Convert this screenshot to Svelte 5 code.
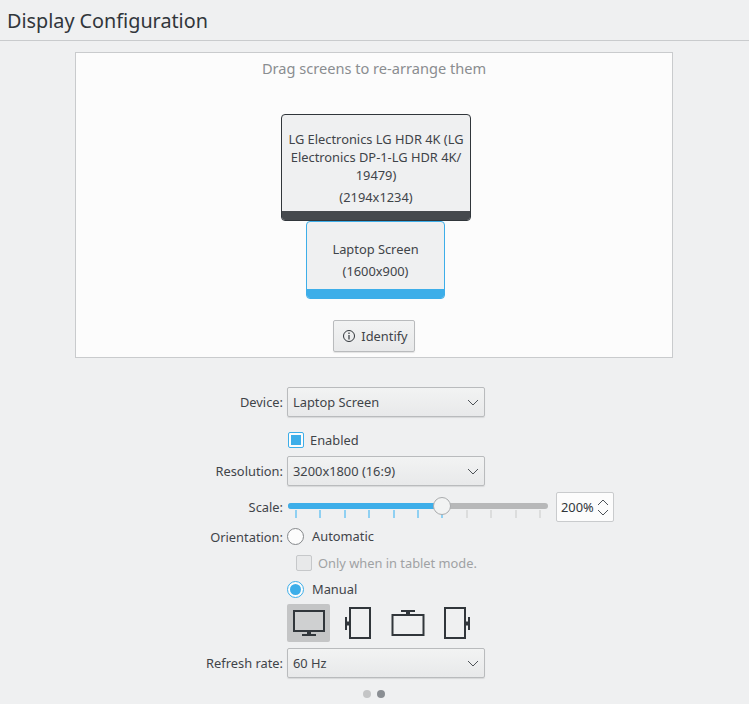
<script>
  const ticks = Array.from({ length: 11 }, (_, i) => i);
</script>

<div class="page">
  <header class="title">Display Configuration</header>

  <section class="canvas">
    <p class="hint">Drag screens to re-arrange them</p>
    <div class="screen lg">
      <div class="body">
        <span class="name">LG Electronics LG HDR 4K (LG Electronics DP-1-LG HDR 4K/ 19479)</span>
        <span class="res">(2194x1234)</span>
      </div>
      <div class="bar"></div>
    </div>
    <div class="screen laptop">
      <div class="body">
        <span class="name">Laptop Screen</span>
        <span class="res">(1600x900)</span>
      </div>
      <div class="bar"></div>
    </div>
    <button class="identify">
      <svg width="14" height="14" viewBox="0 0 14 14" fill="none" stroke="#31363b">
        <circle cx="7" cy="7" r="5.5" />
        <path d="M7 6v4.5M7 3.5v1.5" stroke-width="1.2" />
      </svg>
      Identify
    </button>
  </section>

  <section class="form">
    <span class="label">Device:</span>
    <div class="combo">Laptop Screen <svg class="chev" width="12" height="7" viewBox="0 0 12 7" fill="none" stroke="#4d5257"><path d="M1 1l5 5 5-5" /></svg></div>

    <span></span>
    <div class="check-row enabled"><span class="check on"><i></i></span>Enabled</div>

    <span class="label">Resolution:</span>
    <div class="combo">3200x1800 (16:9) <svg class="chev" width="12" height="7" viewBox="0 0 12 7" fill="none" stroke="#4d5257"><path d="M1 1l5 5 5-5" /></svg></div>

    <span class="label">Scale:</span>
    <div class="scale-row">
      <div class="slider">
        <div class="track"><div class="fill"></div></div>
        <div class="ticks">
          {#each ticks as t}
            <i class:active={t <= 6}></i>
          {/each}
        </div>
        <div class="thumb"></div>
      </div>
      <div class="spin">
        <span>200%</span>
        <svg width="12" height="17" viewBox="0 0 12 17" fill="none" stroke="#4d5257"><path d="M1 6l5-5 5 5M1 11l5 5 5-5" /></svg>
      </div>
    </div>

    <span class="label">Orientation:</span>
    <div class="check-row auto"><span class="radio"></span>Automatic</div>

    <span></span>
    <div class="check-row tablet"><span class="check disabled"></span>Only when in tablet mode.</div>

    <span></span>
    <div class="check-row manual"><span class="radio on"><i></i></span>Manual</div>

    <span></span>
    <div class="orient">
      <div class="ori selected">
        <svg width="34" height="28" viewBox="0 0 34 28" fill="#cfd0d1" stroke="#31363b" stroke-width="2">
          <rect x="2" y="2" width="30" height="20" />
          <path fill="none" d="M10 26h14" />
          <path fill="none" stroke-width="4" d="M17 23v3" />
        </svg>
      </div>
      <div class="ori">
        <svg width="28" height="34" viewBox="0 0 28 34" fill="none" stroke="#31363b" stroke-width="2">
          <rect x="6" y="2" width="20" height="30" />
          <path d="M2 11v13" />
          <path stroke-width="4" d="M3 17.5h3" />
        </svg>
      </div>
      <div class="ori">
        <svg width="34" height="28" viewBox="0 0 34 28" fill="none" stroke="#31363b" stroke-width="2">
          <rect x="1.5" y="6" width="31" height="20" />
          <path d="M10 2h14" />
          <path stroke-width="4" d="M17 3v3" />
        </svg>
      </div>
      <div class="ori">
        <svg width="28" height="34" viewBox="0 0 28 34" fill="none" stroke="#31363b" stroke-width="2">
          <rect x="2" y="2" width="20" height="30" />
          <path d="M26 11v13" />
          <path stroke-width="4" d="M22 17.5h3" />
        </svg>
      </div>
    </div>

    <span class="label refresh">Refresh rate:</span>
    <div class="combo refresh">60 Hz <svg class="chev" width="12" height="7" viewBox="0 0 12 7" fill="none" stroke="#4d5257"><path d="M1 1l5 5 5-5" /></svg></div>
  </section>

  <div class="dots"><i></i><i class="cur"></i></div>
</div>

<style>
  :global(body) {
    margin: 0;
    background: #eff0f1;
  }
  .page {
    width: 749px;
    height: 704px;
    overflow: hidden;
    background: #eff0f1;
    color: #31363b;
    font-family: "Noto Sans", sans-serif;
    font-size: 12.85px;
  }
  .title {
    height: 41px;
    box-sizing: border-box;
    padding: 7px 0 0 7px;
    font-size: 19.8px;
    line-height: 27px;
    border-bottom: 1px solid #c9cbcd;
  }
  .canvas {
    position: relative;
    box-sizing: border-box;
    width: 598px;
    height: 306px;
    margin: 11px 0 0 75px;
    background: #fcfcfc;
    border: 1px solid #c9cbcd;
  }
  .hint {
    margin: 6px 0 0;
    text-align: center;
    font-size: 14.6px;
    line-height: 18px;
    color: #8a8d90;
  }
  .screen {
    position: absolute;
    box-sizing: border-box;
    display: flex;
    flex-direction: column;
    background: #eff0f1;
    border-radius: 4px;
    overflow: hidden;
    text-align: center;
  }
  .screen .body {
    flex: 1;
    display: flex;
    flex-direction: column;
    align-items: center;
    justify-content: center;
    gap: 4px;
    padding: 0 4px;
    line-height: 18px;
    color: #3f4449;
  }
  .res { display: block; }
  .lg {
    left: 205px;
    top: 61px;
    width: 190px;
    height: 107px;
    border: 1px solid #31363b;
  }
  .lg .body { padding-top: 10px; }
  .lg .bar { height: 9px; background: #45494d; }
  .laptop {
    left: 230px;
    top: 168px;
    width: 139px;
    height: 78px;
    border: 1px solid #3daee9;
  }
  .laptop .body { padding-top: 9px; }
  .laptop .bar { height: 9px; background: #3daee9; }
  .identify {
    position: absolute;
    left: 257px;
    top: 267px;
    width: 82px;
    height: 32px;
    padding: 0 0 0 2px;
    display: flex;
    align-items: center;
    justify-content: center;
    gap: 5px;
    font: inherit;
    color: #3f4449;
    background: linear-gradient(#f2f3f3, #e8e9ea);
    border: 1px solid #b9bbbd;
    border-radius: 2px;
    box-shadow: 0 1px 1px rgba(0, 0, 0, 0.1);
  }
  .form {
    display: grid;
    grid-template-columns: 283px 1fr;
    column-gap: 4px;
    margin-top: 29px;
    align-items: center;
  }
  .label {
    text-align: right;
    line-height: 18px;
    color: #3f4449;
  }
  .combo {
    position: relative;
    box-sizing: border-box;
    width: 198px;
    height: 30px;
    padding: 0 5px;
    line-height: 28px;
    background: linear-gradient(#f2f3f3, #e8e9ea);
    border: 1px solid #b9bbbd;
    border-radius: 2px;
    box-shadow: 0 1px 1px rgba(0, 0, 0, 0.1);
    color: #3f4449;
  }
  .chev {
    position: absolute;
    right: 5px;
    top: 11px;
  }
  .check-row {
    display: flex;
    align-items: center;
    height: 20px;
    color: #3f4449;
  }
  .enabled { margin: 13px 0 6px; }
  .check {
    box-sizing: border-box;
    width: 16px;
    height: 16px;
    margin: 0 6px 0 1px;
    border: 1px solid #3daee9;
    border-radius: 2px;
    background: #fcfcfc;
    display: flex;
    align-items: center;
    justify-content: center;
  }
  .check i {
    width: 10px;
    height: 10px;
    background: #3daee9;
  }
  .check.disabled {
    margin: 0 6px 0 9px;
    background: #e8e9ea;
    border-color: #c6c8ca;
  }
  .radio {
    box-sizing: border-box;
    width: 17px;
    height: 17px;
    margin: 0 8px 0 0;
    border: 1px solid #85888b;
    border-radius: 50%;
    background: #fcfcfc;
    display: flex;
    align-items: center;
    justify-content: center;
  }
  .radio.on { border-color: #3daee9; }
  .radio i {
    width: 11px;
    height: 11px;
    border-radius: 50%;
    background: #3daee9;
  }
  .scale-row {
    display: flex;
    align-items: flex-start;
    height: 35px;
    margin-top: 6px;
    gap: 8px;
  }
  .slider {
    position: relative;
    width: 261px;
    height: 24px;
    margin-top: 3px;
  }
  .track {
    position: absolute;
    left: 1px;
    right: 0;
    top: 8px;
    height: 6px;
    border-radius: 3px;
    background: #b7b8b9;
    overflow: hidden;
  }
  .fill {
    width: 155px;
    height: 100%;
    background: #3daee9;
  }
  .thumb {
    position: absolute;
    left: 146px;
    top: 2px;
    box-sizing: border-box;
    width: 18px;
    height: 18px;
    border: 1px solid #a9abad;
    border-radius: 50%;
    background: #f2f3f3;
  }
  .ticks {
    position: absolute;
    left: 8px;
    width: 246px;
    top: 15px;
    display: flex;
    justify-content: space-between;
  }
  .ticks i {
    width: 2px;
    height: 8px;
    background: #dcdddd;
  }
  .ticks i.active { background: #8fd0f2; }
  .spin {
    box-sizing: border-box;
    width: 58px;
    height: 30px;
    display: flex;
    align-items: center;
    justify-content: space-between;
    padding: 0 4px 0 4px;
    background: #fcfcfc;
    border: 1px solid #c9cbcd;
    border-radius: 2px;
  }
  .auto { margin-top: -1px; }
  .tablet { color: #a0a2a4; margin-top: 7px; }
  .manual { margin-top: 6px; }
  .orient {
    display: flex;
    gap: 6.5px;
    margin-top: 5px;
  }
  .ori {
    width: 43px;
    height: 38px;
    display: flex;
    align-items: center;
    justify-content: center;
    border-radius: 2px;
  }
  .ori.selected { background: #c4c5c6; }
  .refresh { margin-top: 6px; }
  .dots {
    display: flex;
    justify-content: center;
    gap: 6px;
    margin-top: 12px;
    padding-right: 2px;
  }
  .dots i {
    width: 8px;
    height: 8px;
    border-radius: 50%;
    background: #c4c5c6;
  }
  .dots i.cur { background: #8a8e93; }
</style>
